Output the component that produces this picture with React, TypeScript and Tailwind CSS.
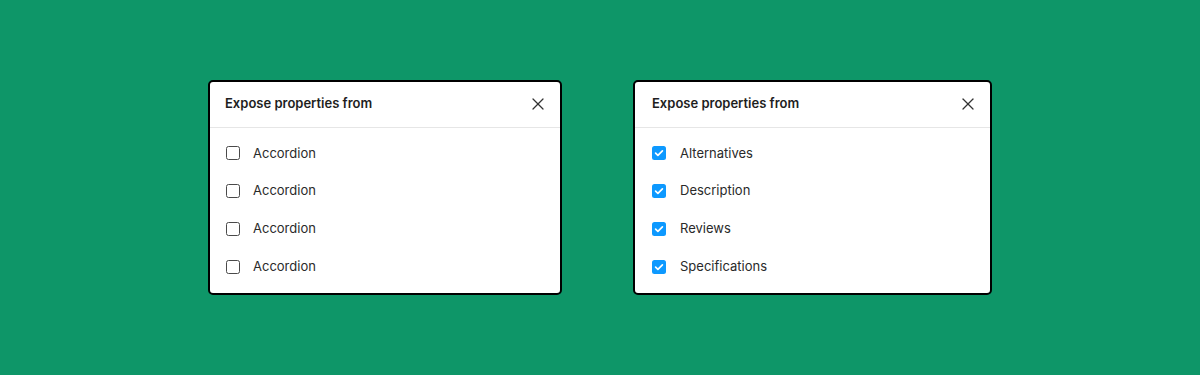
import { X } from "lucide-react";

interface Item {
  label: string;
  checked: boolean;
}

const CheckIcon = () => (
  <svg viewBox="0 0 14 14" className="h-[14px] w-[14px]">
    <rect width="14" height="14" rx="2.5" fill="#0d99ff" />
    <path
      d="M3.6 7.2 L5.9 9.4 L10.4 4.9"
      fill="none"
      stroke="white"
      strokeWidth="1.7"
      strokeLinecap="round"
      strokeLinejoin="round"
    />
  </svg>
);

const Panel: React.FC<{ items: Item[]; width: string; inset: string }> = ({
  items,
  width,
  inset,
}) => (
  <div
    className={`${width} overflow-hidden rounded-[5px] border-2 border-black bg-white`}
  >
    <div
      className={`flex h-[46px] items-center justify-between border-b border-[#e6e6e6] pr-[12px] ${inset}`}
    >
      <h2 className="text-[13px] font-semibold text-[#1e1e1e]">
        Expose properties from
      </h2>
      <X className="h-[20px] w-[20px] text-[#333]" strokeWidth={1.5} />
    </div>
    <ul className="pt-[7px] pb-[8px]">
      {items.map((item, i) => (
        <li key={i} className={`flex h-[37.7px] items-center ${inset}`}>
          {item.checked ? (
            <CheckIcon />
          ) : (
            <span className="ml-px h-[14px] w-[14px] rounded-[2.5px] border-[1.5px] border-[#4a4a4a]" />
          )}
          <span
            className={`${item.checked ? "ml-[14px]" : "ml-[13px]"} text-[13px] text-[#2a2a2a]`}
          >
            {item.label}
          </span>
        </li>
      ))}
    </ul>
  </div>
);

export default function App() {
  const empty: Item[] = Array(4).fill({ label: "Accordion", checked: false });
  const filled: Item[] = [
    { label: "Alternatives", checked: true },
    { label: "Description", checked: true },
    { label: "Reviews", checked: true },
    { label: "Specifications", checked: true },
  ];

  return (
    <main
      className="flex h-[375px] w-full items-center justify-center gap-[71px] bg-[#0e9668]"
      style={{ fontFamily: "Inter, 'Noto Sans', sans-serif" }}
    >
      <Panel items={empty} width="w-[354px]" inset="pl-[15px]" />
      <Panel items={filled} width="w-[359px]" inset="pl-[17px]" />
    </main>
  );
}
